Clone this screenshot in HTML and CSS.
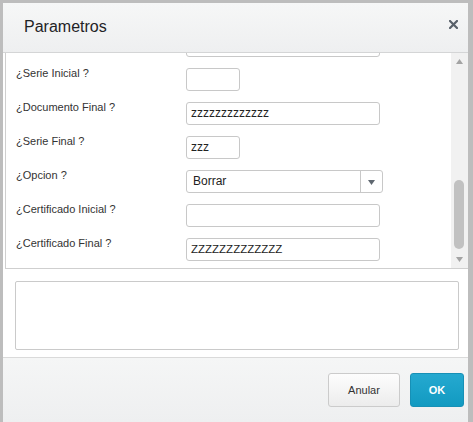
FILE: index.html
```html
<!DOCTYPE html>
<html lang="es">
<head>
    <meta charset="UTF-8">
    <title>Parametros</title>
    <link rel="stylesheet" href="styles.css">
</head>
<body>
    <div class="dialog">
        <div class="header">
            <div class="title">Parametros</div>
            <div class="close">
                <svg width="9" height="9" viewBox="0 0 9 9"><path d="M1 1L8 8M8 1L1 8" stroke="#59616a" stroke-width="2.2" stroke-linecap="square"/></svg>
            </div>
        </div>
        <div class="scroll_area">
            <div class="fields">
                <div class="fields_inner">
                    <!-- fila anterior, ya desplazada fuera de la vista -->
                    <div class="row">
                        <div class="label"></div>
                        <div class="field long"></div>
                    </div>
                    <div class="row">
                        <div class="label">¿Serie Inicial ?</div>
                        <div class="field short"></div>
                    </div>
                    <div class="row">
                        <div class="label">¿Documento Final ?</div>
                        <div class="field long">zzzzzzzzzzzzz</div>
                    </div>
                    <div class="row">
                        <div class="label">¿Serie Final ?</div>
                        <div class="field short">zzz</div>
                    </div>
                    <div class="row">
                        <div class="label">¿Opcion ?</div>
                        <div class="field select">
                            <div class="select_text">Borrar</div>
                            <div class="select_btn">
                                <svg width="7" height="5" viewBox="0 0 7 5"><path d="M0 0H7L3.5 5Z" fill="#5f6770"/></svg>
                            </div>
                        </div>
                    </div>
                    <div class="row">
                        <div class="label">¿Certificado Inicial ?</div>
                        <div class="field long"></div>
                    </div>
                    <div class="row">
                        <div class="label">¿Certificado Final ?</div>
                        <div class="field long upper">ZZZZZZZZZZZZZ</div>
                    </div>
                </div>
            </div>
            <div class="scrollbar">
                <div class="arrow">
                    <svg width="7" height="5" viewBox="0 0 7 5"><path d="M0 5H7L3.5 0Z" fill="#a3a3a3"/></svg>
                </div>
                <div class="track">
                    <div class="thumb"></div>
                </div>
                <div class="arrow">
                    <svg width="7" height="5" viewBox="0 0 7 5"><path d="M0 0H7L3.5 5Z" fill="#a3a3a3"/></svg>
                </div>
            </div>
        </div>
        <div class="memo"></div>
        <div class="footer">
            <div class="btn btn_cancel">Anular</div>
            <div class="btn btn_ok">OK</div>
        </div>
    </div>
</body>
</html>
```

FILE: styles.css
```css
*{
    margin: 0;
    padding: 0;
    box-sizing: border-box;
}
html,body{
    width: 100%;
    height: 100%;
    overflow: hidden;
}
body{
    background-color: #bdbdbd;
    font-family: "Liberation Sans", Arial, sans-serif;
    color: #333;
}
.dialog{
    margin: 3px 5px 0 3px;
    height: 419px;
    background-color: #fff;
    display: flex;
    flex-direction: column;
}
.header{
    height: 50px;
    flex-shrink: 0;
    border-bottom: 1px solid #d4d5d6;
    background: linear-gradient(#f6f7f7, #eeeff0);
    display: flex;
    justify-content: space-between;
    align-items: center;
    padding: 0 10px 0 21px;
}
.title{
    font-size: 16px;
    color: #1f2326;
    margin-top: -1px;
}
.close{
    align-self: flex-start;
    margin-top: 17px;
    height: 9px;
    cursor: pointer;
}
.close svg{
    display: block;
}
.scroll_area{
    height: 216px;
    flex-shrink: 0;
    margin-left: 2px;
    border-left: 1px solid #cfcfcf;
    border-bottom: 1px solid #cfcfcf;
    display: flex;
}
.fields{
    flex: 1;
    overflow: hidden;
}
.fields_inner{
    margin-top: -19px;
}
.row{
    height: 34px;
    display: flex;
    align-items: flex-start;
}
.label{
    width: 180px;
    padding-left: 10px;
    font-size: 11px;
    line-height: 12px;
    margin-top: -1px;
    color: #333;
}
.field{
    height: 23px;
    border: 1px solid #c8c8c8;
    border-radius: 3px;
    font-size: 12px;
    line-height: 21px;
    padding-left: 4px;
    color: #222;
}
.short{
    width: 54px;
}
.long{
    width: 194px;
}
.upper{
    font-size: 11.5px;
}
.select{
    width: 197px;
    display: flex;
    padding-left: 0;
}
.select_text{
    flex: 1;
    padding-left: 6px;
}
.select_btn{
    width: 22px;
    border-left: 1px solid #c8c8c8;
    display: flex;
    align-items: center;
    justify-content: center;
}
.select_btn svg{
    display: block;
    margin-top: 1px;
}
.scrollbar{
    width: 17px;
    background-color: #f1f1f1;
    display: flex;
    flex-direction: column;
}
.arrow{
    height: 17px;
    display: flex;
    align-items: center;
    justify-content: center;
}
.arrow svg{
    display: block;
}
.track{
    flex: 1;
}
.thumb{
    width: 10px;
    height: 69px;
    margin: 110px 0 0 3px;
    background-color: #c1c1c1;
    border-radius: 5px;
}
.memo{
    height: 69px;
    flex-shrink: 0;
    margin: 12px 9px 0 12px;
    border: 1px solid #cacaca;
    border-radius: 2px;
}
.footer{
    flex: 1;
    margin-top: 7px;
    border-top: 1px solid #dadada;
    background: linear-gradient(#f5f6f6, #eeeff0);
    display: flex;
    justify-content: flex-end;
    align-items: flex-start;
    gap: 10px;
    padding: 15px 4px 0 0;
}
.btn{
    height: 34px;
    line-height: 32px;
    text-align: center;
    font-size: 11px;
    border-radius: 3px;
    cursor: pointer;
}
.btn_cancel{
    width: 72px;
    border: 1px solid #cbcbcb;
    background: linear-gradient(#fdfdfd, #ececec);
    color: #333;
}
.btn_ok{
    width: 54px;
    border: 1px solid #1790b6;
    background: linear-gradient(#25a9d0, #129ac1);
    color: #fff;
    font-weight: bold;
}
```
